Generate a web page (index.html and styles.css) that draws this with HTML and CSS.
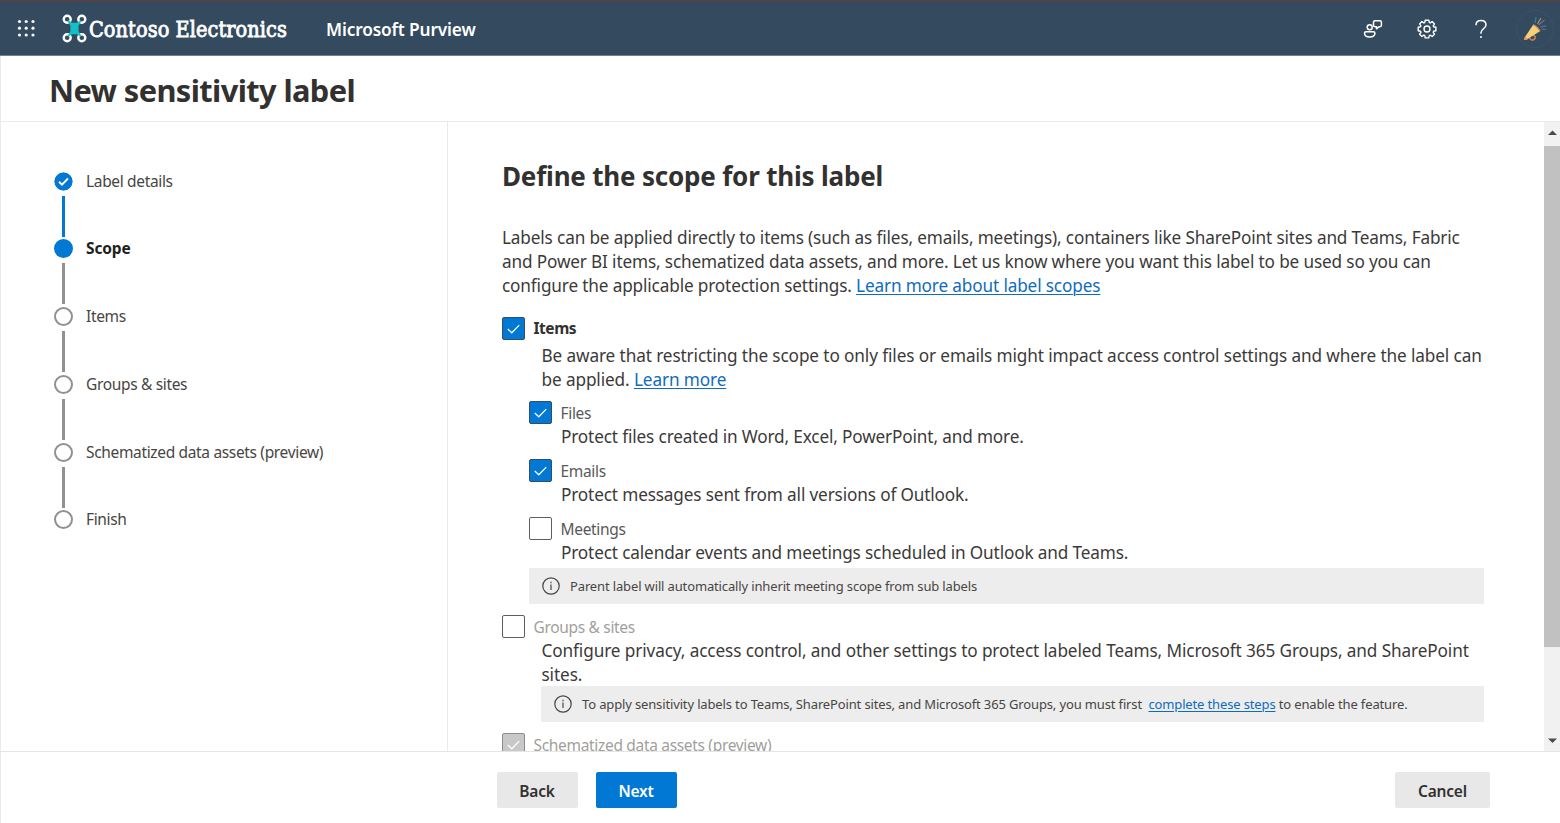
FILE: index.html
```html
<!DOCTYPE html>
<html lang="en">
<head>
<meta charset="utf-8">
<title>New sensitivity label</title>
<link rel="stylesheet" href="styles.css">
</head>
<body>
<div class="app">
  <header class="topbar">
    <svg class="waffle" width="20" height="20" viewBox="0 0 20 20" fill="#f4f6f8"><circle cx="2.500" cy="2.500" r="1.600"/><circle cx="9.200" cy="2.500" r="1.600"/><circle cx="16" cy="2.500" r="1.600"/><circle cx="2.500" cy="9.200" r="1.600"/><circle cx="9.200" cy="9.200" r="1.600"/><circle cx="16" cy="9.200" r="1.600"/><circle cx="2.500" cy="16" r="1.600"/><circle cx="9.200" cy="16" r="1.600"/><circle cx="16" cy="16" r="1.600"/></svg>
    <svg class="logo" width="25" height="29" viewBox="0 0 25 29" fill="none" stroke="#fff" stroke-width="2.400">
      <circle cx="5.200" cy="5.300" r="3.500"/><circle cx="19.800" cy="5.300" r="3.500"/><circle cx="5.200" cy="23.700" r="3.500"/><circle cx="19.800" cy="23.700" r="3.500"/>
      <path d="M6.500 7L9.700 9.500H15.300L18.500 7L15.800 11.500V17.500L18.500 22L15.300 19.500H9.700L6.500 22L9.200 17.500V11.500Z" fill="#14c0c4" stroke="#14c0c4" stroke-width="1.500" stroke-linejoin="round"/>
    </svg>
    <span class="brand">Contoso Electronics</span>
    <span class="product">Microsoft Purview</span>
    <div class="tools">
      <svg width="20" height="20" viewBox="0 0 20 20" fill="none" stroke="#fff" stroke-width="1.500" stroke-linejoin="round"><circle cx="6.700" cy="8.200" r="2.500"/><path d="M3 12.700H10.400Q11.900 12.700 11.900 14C11.900 16.500 9.600 18 6.700 18S1.500 16.500 1.500 14Q1.500 12.700 3 12.700ZM10.500 6V3Q10.500 1.700 12 1.700H17Q18.400 1.700 18.400 3V6.300Q18.400 7.700 17 7.700H16.200L13.500 9.800V7.700H11.800Q10.500 7.700 10.500 6Z"/></svg>
      <svg width="20" height="20" viewBox="0 0 20 20" fill="none" stroke="#fff" stroke-width="1.400" stroke-linejoin="round"><circle cx="10" cy="10" r="3"/><path d="M8.200 1.200H11.800L12.300 3.500L13.300 3.900L15.200 2.600L17.500 4.900L16.200 6.800L16.600 7.800L18.900 8.200V11.800L16.600 12.300L16.200 13.300L17.500 15.200L15.200 17.500L13.300 16.200L12.300 16.600L11.800 18.900H8.200L7.800 16.600L6.800 16.200L4.900 17.500L2.600 15.200L3.900 13.300L3.500 12.300L1.200 11.800V8.200L3.500 7.800L3.900 6.800L2.600 4.900L4.900 2.600L6.800 3.900L7.800 3.500Z"/></svg>
      <svg width="20" height="20" viewBox="0 0 20 20" fill="none" stroke="#fff" stroke-width="1.500"><path d="M5 6.200C5 3 7.200 1.500 10 1.500S15 3.200 15 6C15 9.500 10 10 10 13.500V14.800"/><path d="M10 17V19"/></svg>
      <svg class="avatar" width="38" height="38" viewBox="0 0 38 38" fill="none"><circle cx="19" cy="19" r="18.500" stroke="#3d5269"/><path d="M13 27Q15 31.500 18 29.500T17 24.500" stroke="#c87f55" stroke-width="1.600"/><path d="M8 28.500L17 15Q22 17 23.500 21.500L10 30Q7.800 30.300 8 28.500Z" fill="#f6cf78"/><path d="M8 28.500L9 27L12 29L10 30Q7.800 30.300 8 28.500Z" fill="#e88e58"/><path d="M17 14.500Q22.500 17 24 21.500" stroke="#db9656" stroke-width="1.200"/><path d="M19 13L20 7M24 17L30 16" stroke="#287f96" stroke-width="1.400"/><path d="M21.500 14L25 8" stroke="#97a84d" stroke-width="1.200"/><path d="M22.500 15L28.500 10M25.500 19L30 19.500" stroke="#965d84" stroke-width="1.200"/></svg>
    </div>
  </header>
  <div class="titlebar"><h1>New sensitivity label</h1></div>
  <main class="body">
    <nav class="steps">
      <div class="step done"><div class="rail"><svg class="dot" width="19" height="19" viewBox="0 0 19 19"><circle cx="9.500" cy="9.500" r="9.200" fill="#0078d4"/><path d="M5 9.700L8 12.600L14 6.500" fill="none" stroke="#fff" stroke-width="1.900"/></svg><i></i></div><span>Label details</span></div>
      <div class="step"><div class="rail"><b class="dot full"></b><i></i></div><span class="current">Scope</span></div>
      <div class="step"><div class="rail"><b class="dot"></b><i></i></div><span>Items</span></div>
      <div class="step"><div class="rail"><b class="dot"></b><i></i></div><span>Groups &amp; sites</span></div>
      <div class="step"><div class="rail"><b class="dot"></b><i></i></div><span>Schematized data assets (preview)</span></div>
      <div class="step"><div class="rail"><b class="dot"></b></div><span>Finish</span></div>
    </nav>
    <section class="content">
      <h2>Define the scope for this label</h2>
      <p class="text intro">Labels can be applied directly to items (such as files, emails, meetings), containers like SharePoint sites and Teams, Fabric<br>and Power BI items, schematized data assets, and more. Let us know where you want this label to be used so you can<br>configure the applicable protection settings. <a>Learn more about label scopes</a></p>

      <div class="option">
        <div class="check first"><span class="box on"><svg width="22" height="22" viewBox="0 0 22 22"><path d="M5 11.500L9.200 15.500L17 7.500"/></svg></span><label class="strong">Items</label></div>
        <p class="text d1">Be aware that restricting the scope to only files or emails might impact access control settings and where the label can<br>be applied. <a>Learn more</a></p>
        <div class="sub">
          <div class="check"><span class="box on"><svg width="22" height="22" viewBox="0 0 22 22"><path d="M5 11.500L9.200 15.500L17 7.500"/></svg></span><label>Files</label></div>
          <p class="text d2">Protect files created in Word, Excel, PowerPoint, and more.</p>
          <div class="check"><span class="box on"><svg width="22" height="22" viewBox="0 0 22 22"><path d="M5 11.500L9.200 15.500L17 7.500"/></svg></span><label>Emails</label></div>
          <p class="text d2">Protect messages sent from all versions of Outlook.</p>
          <div class="check"><span class="box"></span><label>Meetings</label></div>
          <p class="text d2 tight">Protect calendar events and meetings scheduled in Outlook and Teams.</p>
          <div class="info"><svg width="18" height="18" viewBox="0 0 18 18"><circle cx="9" cy="9" r="8.200"/><path d="M9 7.500V13M9 4.800V6.200"/></svg><span>Parent label will automatically inherit meeting scope from sub labels</span></div>
        </div>
      </div>
      <div class="option groups">
        <div class="check"><span class="box"></span><label class="muted">Groups &amp; sites</label></div>
        <p class="text d1">Configure privacy, access control, and other settings to protect labeled Teams, Microsoft 365 Groups, and SharePoint<br>sites.</p>
        <div class="info indent"><svg width="18" height="18" viewBox="0 0 18 18"><circle cx="9" cy="9" r="8.200"/><path d="M9 7.500V13M9 4.800V6.200"/></svg><span>To apply sensitivity labels to Teams, SharePoint sites, and Microsoft 365 Groups, you must first&nbsp; <a>complete these steps</a> to enable the feature.</span></div>
      </div>
      <div class="option">
        <div class="check"><span class="box off"><svg width="22" height="22" viewBox="0 0 22 22"><path d="M5 11.500L9.200 15.500L17 7.500"/></svg></span><label class="muted">Schematized data assets (preview)</label></div>
      </div>
    </section>
    <div class="scrollbar"><svg width="16" height="24" viewBox="0 0 16 24"><path d="M4 13L8.500 8.500L13 13Z"/></svg><div class="thumb"></div><svg width="16" height="20" viewBox="0 0 16 20"><path d="M4 7.500L8.500 12L13 7.500Z"/></svg></div>
  </main>
  <footer class="actions"><button>Back</button><button class="primary">Next</button><button class="cancel">Cancel</button></footer>
</div>
</body>
</html>
```
FILE: styles.css
```css
* { box-sizing: border-box; }
body { margin: 0; overflow: hidden; background: #fff; color: #323130; font-family: "Noto Sans", "Open Sans", sans-serif; }
h1, h2, p { margin: 0; white-space: nowrap; }
svg { display: block; flex: none; }
.app { width: 1560px; height: 823px; display: flex; flex-direction: column; }
.topbar { height: 56px; flex: none; display: flex; align-items: center; padding: 0 6px 0 17px; background: #334a5f; border-top: 2px solid #514448; border-bottom: 1px solid #708095; color: #fff; }
.logo { margin-left: 25px; }
.brand { width: 199px; margin: 2px 0 0 2px; font-family: "DejaVu Serif", serif; font-size: 21.500px; line-height: 30px; font-stretch: condensed; letter-spacing: 0.070px; -webkit-text-stroke: 0.800px #fff; white-space: nowrap; }
.product { margin: 2px 0 0 38px; font-size: 17.300px; font-weight: 600; letter-spacing: -0.150px; white-space: nowrap; }
.tools { margin-left: auto; display: flex; align-items: center; gap: 34px; }
.avatar { margin-left: -9px; }
.titlebar { height: 66px; flex: none; display: flex; align-items: center; padding: 3px 0 0 48px; border-bottom: 1px solid #eaeaea; border-left: 1px solid #eaeaea; }
h1 { font-size: 30.800px; font-weight: 700; line-height: 42px; letter-spacing: -0.600px; }
.body { height: 629px; flex: none; display: flex; }
.steps { width: 448px; flex: none; padding: 49.500px 0 0 53px; border-right: 1px solid #eaeaea; border-left: 1px solid #eaeaea; }
.step { height: 67.800px; display: flex; color: #484644; font-size: 15.500px; line-height: 19px; letter-spacing: -0.340px; }
.rail { width: 19px; height: 67.800px; margin-right: 13px; display: flex; flex-direction: column; align-items: center; }
.rail i { width: 2.500px; height: 41px; margin-top: 5px; background: #919191; }
.done .rail i { background: #0078d4; }
.dot { width: 19px; height: 19px; flex: none; border: 2.500px solid #919191; border-radius: 50%; }
svg.dot { border: 0; }
.full { border: 0; background: #0078d4; }
.current { color: #201f1e; font-weight: 700; letter-spacing: -0.150px; }
.content { flex: 1; overflow: hidden; padding: 36px 0 0 54px; }
h2 { font-size: 26px; line-height: 36px; font-weight: 700; letter-spacing: -0.190px; }
.text { font-size: 17.200px; line-height: 24px; letter-spacing: -0.145px; color: #3b3a39; }
.intro { margin-top: 32px; margin-bottom: 18px; }
a { color: #0f6cbd; text-decoration: underline; text-decoration-thickness: 1px; text-underline-offset: 2px; }
.check { height: 24px; display: flex; align-items: center; gap: 8.500px; font-size: 15.500px; color: #5b5958; letter-spacing: -0.320px; }
.check label { padding-top: 1px; }
.check.first label { padding: 0 0 1px; }
.box { width: 23px; height: 23px; flex: none; border: 1.500px solid #605e5c; border-radius: 2px; }
.box svg { width: 21px; height: 21px; fill: none; stroke: #fff; stroke-width: 1.300; }
.on { background: #0078d4; border: 1px solid #334f68; }
.off { background: #c8c8c8; border: 1px solid #8c8c8c; }
.strong { font-weight: 700; color: #323130; letter-spacing: -0.450px; }
.muted { color: #a19f9d; }
.d1 { margin: 4px 0 0 39.500px; letter-spacing: -0.110px; }
.sub { margin: 8px 0 0 27px; }
.d2 { margin: 1px 0 9px 32px; }
.tight { margin-bottom: 3px; }
.info { width: 955px; height: 36px; display: flex; align-items: center; gap: 10px; padding-left: 13px; background: #ededed; color: #484644; font-size: 13px; letter-spacing: -0.140px; white-space: nowrap; }
.info svg { fill: none; stroke: #484644; stroke-width: 1.200; }
.indent { width: 943px; margin-left: 39px; }
.groups { margin: 10px 0; }
.groups .d1 { margin-top: 1px; margin-bottom: -1px; }
.scrollbar { width: 16px; flex: none; display: flex; flex-direction: column; background: #f1f1f1; }
.scrollbar svg { fill: #4a4a4a; }
.thumb { height: 502px; background: #c1c1c1; margin-bottom: 84px; }
.actions { height: 72px; flex: none; display: flex; align-items: flex-start; gap: 18px; padding: 20px 70px 0 495.500px; border-top: 1px solid #e5e5e5; border-left: 1px solid #eaeaea; }
button { width: 81px; height: 36px; padding: 1px 0 0; border: 0; border-radius: 2px; background: #e8e8e8; color: #323130; font: 600 15.500px "Noto Sans", sans-serif; letter-spacing: -0.200px; }
.primary { background: #0078d4; color: #fff; }
.cancel { width: 95px; margin-left: auto; }
```
